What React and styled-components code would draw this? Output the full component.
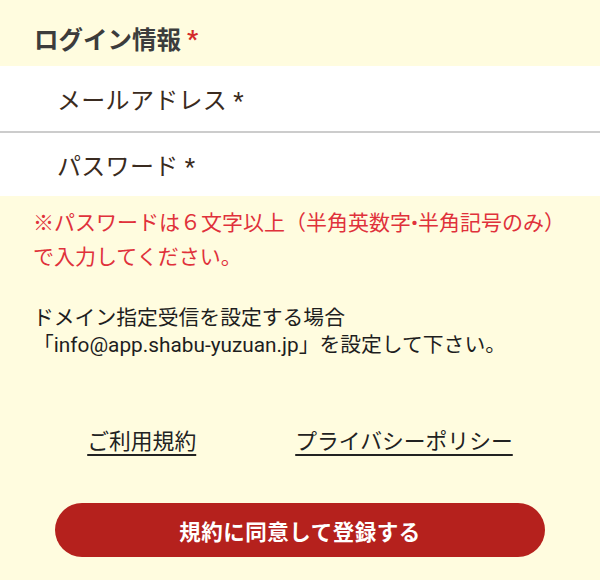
import React from "react";
import styled, { createGlobalStyle } from "styled-components";

const Global = createGlobalStyle`
  html, body {
    margin: 0;
    padding: 0;
    background: #fffcdf;
  }
  body {
    font-family: Roboto, "Noto Sans CJK JP", "Noto Sans", sans-serif;
    -webkit-font-smoothing: antialiased;
  }
`;

const Page = styled.div`
  width: 600px;
  min-height: 580px;
  background: #fffcdf;
  display: flex;
  flex-direction: column;
`;

const SectionHeader = styled.div`
  height: 66px;
  display: flex;
  align-items: center;
  padding-left: 34px;
  padding-top: 10px;
  box-sizing: border-box;
  font-size: 24.5px;
  font-weight: 700;
  color: #3c3c3c;
`;

const Required = styled.span`
  color: #d42a2a;
  margin-left: 6px;
`;

const Field = styled.div`
  height: ${(p) => p.$h}px;
  background: #ffffff;
  display: flex;
  align-items: center;
  padding-left: 57px;
  box-sizing: border-box;
  font-size: 24px;
  color: #3a2b20;
  letter-spacing: 0.3px;
`;

const Divider = styled.div`
  height: 2px;
  background: #cccccc;
`;

const Note = styled.p`
  margin: 10px 0 0;
  padding: 0 33px;
  font-size: 21px;
  line-height: 34px;
  color: #e0313b;
`;

const Info = styled.p`
  margin: 31px 0 0;
  padding: 0 33px;
  font-size: 20.8px;
  line-height: 27px;
  color: #1e1e1e;
`;

const Links = styled.div`
  margin-top: 66px;
  display: flex;
  justify-content: center;
  gap: 99px;
`;

const Link = styled.a`
  font-size: 21.8px;
  line-height: 33px;
  color: #222;
  text-decoration: underline;
  text-underline-offset: 5px;
  text-decoration-thickness: 2px;
  cursor: pointer;
`;

const SubmitButton = styled.button`
  margin: 45px 55px 0;
  height: 54px;
  border: none;
  border-radius: 27px;
  background: #b5211d;
  color: #ffffff;
  font-family: "Noto Sans CJK JP", sans-serif;
  font-size: 21.5px;
  font-weight: 700;
  letter-spacing: 0.5px;
  cursor: pointer;
`;

export default function App() {
  return (
    <Page>
      <Global />
      <SectionHeader>
        ログイン情報<Required>*</Required>
      </SectionHeader>
      <Field $h={65}>メールアドレス *</Field>
      <Divider />
      <Field $h={63}>パスワード *</Field>
      <Note>
        ※パスワードは６文字以上（半角英数字•半角記号のみ）
        <br />
        で入力してください。
      </Note>
      <Info>
        ドメイン指定受信を設定する場合
        <br />
        「info@app.shabu-yuzuan.jp」を設定して下さい。
      </Info>
      <Links>
        <Link>ご利用規約</Link>
        <Link>プライバシーポリシー</Link>
      </Links>
      <SubmitButton>規約に同意して登録する</SubmitButton>
    </Page>
  );
}
